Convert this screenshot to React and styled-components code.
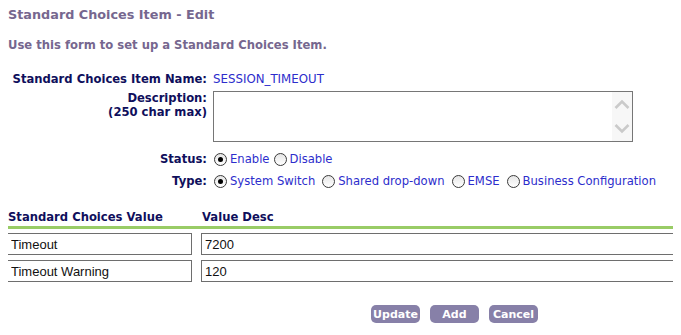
import styled, { createGlobalStyle } from 'styled-components';

const GlobalStyle = createGlobalStyle`
  html, body {
    overflow: hidden;
  }
  body {
    margin: 8px;
    background: #ffffff;
    font-family: "DejaVu Sans", Verdana, sans-serif;
  }
`;

const Page = styled.div`
  width: 893px;
`;

const Title = styled.h1`
  margin: 0;
  font-size: 12.8px;
  line-height: 14px;
  font-weight: bold;
  color: #76678f;
`;

const Intro = styled.p`
  margin: 16px 0 0;
  font-size: 11.6px;
  line-height: 14px;
  font-weight: bold;
  color: #76678f;
`;

const Form = styled.div`
  margin-top: 20px;
  width: 680px;
`;

const Field = styled.div`
  display: grid;
  grid-template-columns: 199px auto;
  column-gap: 6px;
  align-items: ${p => (p.$top ? 'start' : 'center')};
  margin-top: ${p => p.$gap || 0}px;
`;

const Label = styled.div`
  text-align: right;
  font-size: 11.6px;
  line-height: 14px;
  font-weight: bold;
  color: #0f0f5c;
  white-space: nowrap;
`;

const Value = styled.div`
  font-size: 11.8px;
  line-height: 14px;
  color: #2d2dcc;
`;

const AreaBox = styled.div`
  display: flex;
  width: 418px;
  height: 49px;
  border: 1px solid #767676;
`;

const Area = styled.textarea`
  flex: 1;
  border: none;
  outline: none;
  resize: none;
  padding: 2px;
  font-family: "Liberation Sans", Arial, sans-serif;
  font-size: 13px;
`;

const ScrollTrack = styled.div`
  width: 20px;
  background: #f7f7f7;
  display: flex;
  flex-direction: column;
  align-items: center;
  justify-content: space-between;
  padding: 7px 0 7px;
`;

const Options = styled.div`
  display: flex;
  align-items: center;
  padding-left: 1px;
  font-size: 11.6px;
  line-height: 14px;
  color: #2d2dcc;
`;

const Option = styled.label`
  display: flex;
  align-items: center;
  gap: 3px;
  margin-right: ${p => (p.$wide ? '7px' : '4px')};
`;

const Radio = styled.span`
  box-sizing: border-box;
  width: 13px;
  height: 13px;
  border: 1px solid #3a3a3a;
  border-radius: 50%;
  background: linear-gradient(#e6e6e6, #ffffff);
  display: flex;
  align-items: center;
  justify-content: center;
  &::after {
    content: '';
    width: 5px;
    height: 5px;
    border-radius: 50%;
    background: ${p => (p.$checked ? '#000000' : 'transparent')};
  }
`;

const Table = styled.div`
  margin-top: 22px;
  width: 893px;
  margin-left: -1px;
`;

const HeadRow = styled.div`
  display: grid;
  grid-template-columns: 194px 1fr;
  border-bottom: 3px solid #99cc66;
  padding: 0 0 2px 1px;
`;

const HeadCell = styled.div`
  font-size: 11.6px;
  line-height: 14px;
  font-weight: bold;
  color: #0f0f5c;
`;

const Row = styled.div`
  display: grid;
  grid-template-columns: 185px 1fr;
  column-gap: 9px;
  margin-top: ${p => (p.$first ? '4px' : '5px')};
`;

const Cell = styled.input`
  box-sizing: border-box;
  height: 22px;
  width: 100%;
  border: 1px solid #6e6e6e;
  padding: 0 3px;
  font-family: "Liberation Sans", Arial, sans-serif;
  font-size: 13px;
  color: #111111;
  outline: none;
`;

const Buttons = styled.div`
  display: flex;
  justify-content: center;
  gap: 10px;
  margin-top: 23px;
`;

const Button = styled.button`
  width: 49px;
  height: 18px;
  border: none;
  border-radius: 5px;
  background: #8780a8;
  color: #ffffff;
  font-family: "DejaVu Sans", Verdana, sans-serif;
  font-size: 11px;
  font-weight: bold;
  padding: 0;
`;

const Chevron = ({ up }) => (
  <svg width="16" height="10" viewBox="0 0 16 10">
    <path
      d={up ? 'M1.5 9 L8 2.5 L14.5 9' : 'M1.5 1 L8 7.5 L14.5 1'}
      fill="none"
      stroke="#cacaca"
      strokeWidth="2.6"
    />
  </svg>
);

const RadioGroup = ({ items, checked }) => (
  <Options>
    {items.map((item, i) => (
      <Option key={item} $wide={items.length > 2}>
        <Radio $checked={i === checked} />
        {item}
      </Option>
    ))}
  </Options>
);

export default function App() {
  return (
    <Page>
      <GlobalStyle />
      <Title>Standard Choices Item - Edit</Title>
      <Intro>Use this form to set up a Standard Choices Item.</Intro>
      <Form>
        <Field>
          <Label>Standard Choices Item Name:</Label>
          <Value>SESSION_TIMEOUT</Value>
        </Field>
        <Field $top $gap={5}>
          <Label>
            Description:
            <br />
            (250 char max)
          </Label>
          <AreaBox>
            <Area />
            <ScrollTrack>
              <Chevron up />
              <Chevron />
            </ScrollTrack>
          </AreaBox>
        </Field>
        <Field $gap={10}>
          <Label>Status:</Label>
          <RadioGroup items={['Enable', 'Disable']} checked={0} />
        </Field>
        <Field $gap={8}>
          <Label>Type:</Label>
          <RadioGroup
            items={['System Switch', 'Shared drop-down', 'EMSE', 'Business Configuration']}
            checked={0}
          />
        </Field>
      </Form>
      <Table>
        <HeadRow>
          <HeadCell>Standard Choices Value</HeadCell>
          <HeadCell>Value Desc</HeadCell>
        </HeadRow>
        <Row $first>
          <Cell defaultValue="Timeout" />
          <Cell defaultValue="7200" />
        </Row>
        <Row>
          <Cell defaultValue="Timeout Warning" />
          <Cell defaultValue="120" />
        </Row>
      </Table>
      <Buttons>
        <Button>Update</Button>
        <Button>Add</Button>
        <Button>Cancel</Button>
      </Buttons>
    </Page>
  );
}
